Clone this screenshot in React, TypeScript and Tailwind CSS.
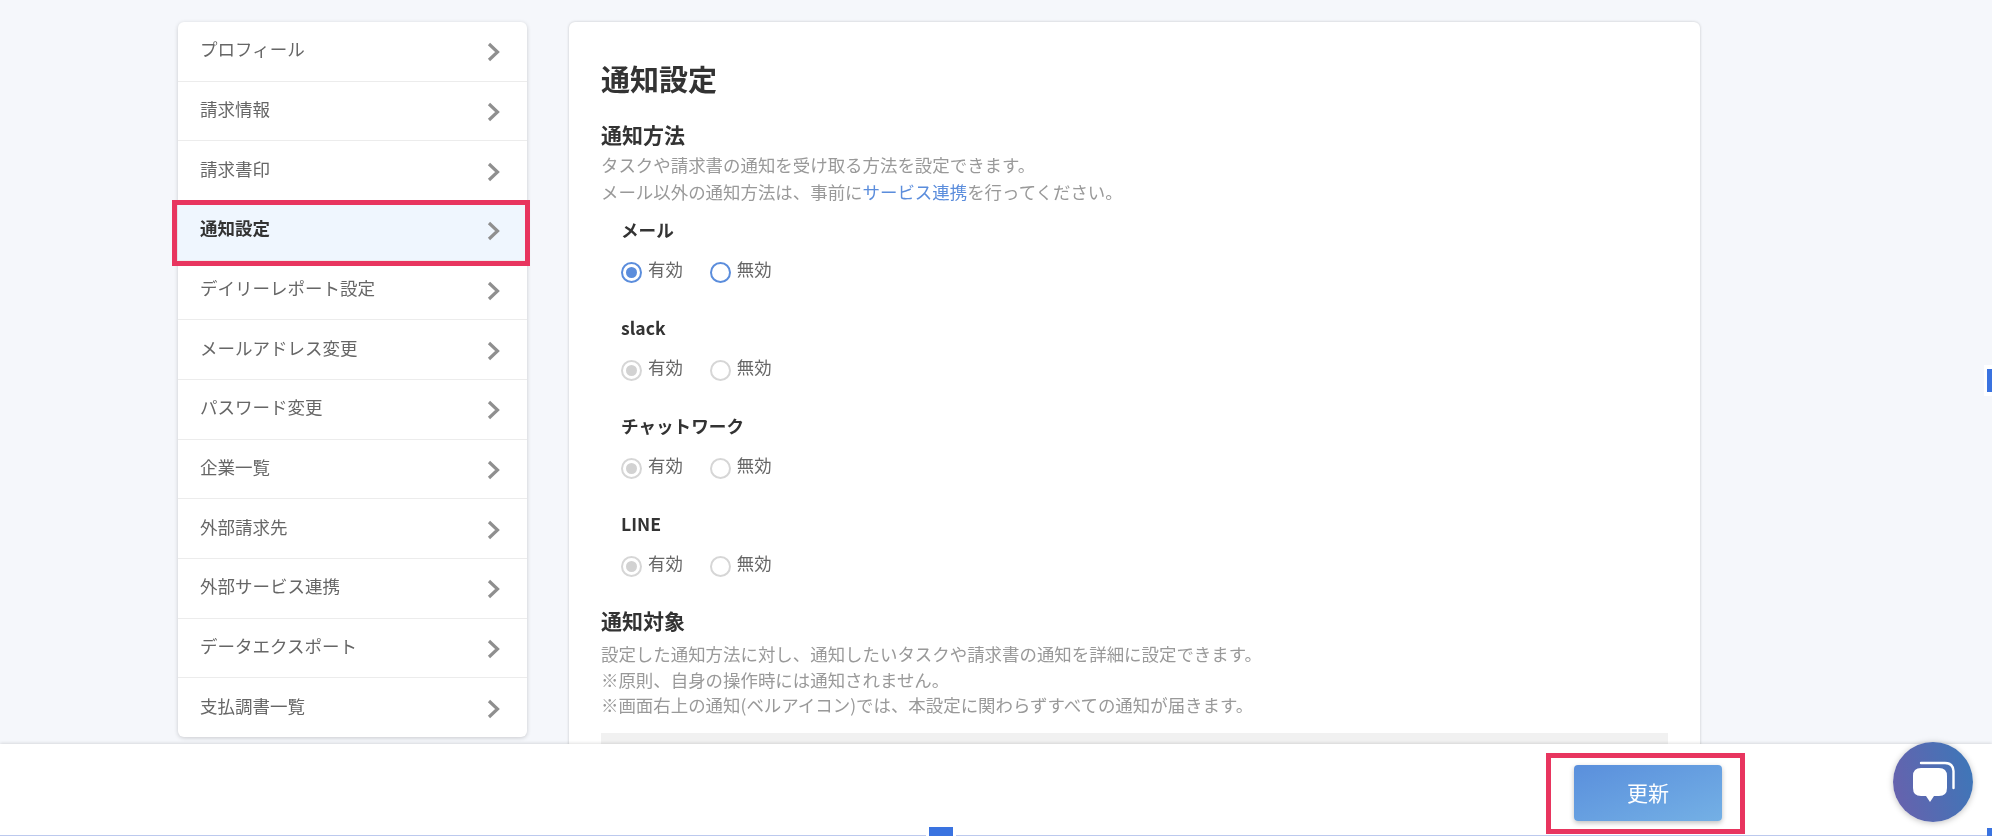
const items = ["プロフィール","請求情報","請求書印","通知設定","デイリーレポート設定","メールアドレス変更","パスワード変更","企業一覧","外部請求先","外部サービス連携","データエクスポート","支払調書一覧"];

function Radio({ label, checked, disabled }: { label: string; checked?: boolean; disabled?: boolean }) {
  return (
    <div className="flex items-center h-[28px]">
      <span className={"w-[21px] h-[21px] rounded-full border-2 bg-white flex items-center justify-center shrink-0 " + (disabled ? "border-[#d6d6d6]" : "border-[#5b8ddc]")}>
        {checked && <span className={"w-[11px] h-[11px] rounded-full " + (disabled ? "bg-[#d2d2d2]" : "bg-[#5b8ddc]")} />}
      </span>
      <span className="ml-[6px] text-[17.4px] text-[#666] leading-[28px] -translate-y-[3px]">{label}</span>
    </div>
  );
}

function Group({ name, disabled }: { name: string; disabled?: boolean }) {
  return (
    <div className="pl-[20px] mb-[28px]">
      <div className="h-[28px] leading-[28px] text-[17.6px] font-bold text-[#333]">{name}</div>
      <div className="mt-[14px] flex gap-[27px]">
        <Radio label="有効" checked disabled={disabled} />
        <Radio label="無効" disabled={disabled} />
      </div>
    </div>
  );
}

function Chevron() {
  return (
    <svg className="w-[13px] h-[20px] shrink-0 mt-[2px]" viewBox="0 0 13 20" fill="none" stroke="#8f8f8f" strokeWidth="3.2">
      <path d="M2 2 L10.5 10 L2 18" />
    </svg>
  );
}

export default function App() {
  return (
    <div className="relative h-[836px] w-full overflow-hidden bg-[#f5f7fb] flex flex-col blur-[0.4px] font-['Noto_Sans_CJK_JP','Noto_Sans',sans-serif]">
      <div className="h-[744px] overflow-hidden flex items-start pt-[22px] pl-[178px] gap-[42px] shrink-0">
        <nav className="w-[349px] h-[715px] bg-white rounded-[6px] shadow-[0_1px_4px_rgba(0,0,0,0.18)] flex flex-col shrink-0">
          {items.map((t, i) => {
            const active = t === "通知設定";
            return (
              <div key={t} className={"relative flex-1 flex items-center justify-between pl-[22px] pr-[27px] " + (active ? "bg-[#eff6fe]" : "") + (i < items.length - 1 ? " border-b border-[#ececec]" : "")}>
                <span className={"text-[17.5px] leading-[24px] -translate-y-[2px] " + (active ? "font-bold text-[#333]" : "text-[#666]")}>{t}</span>
                <Chevron />
                {active && <div className="absolute left-[-6px] right-[-3px] top-[-1px] bottom-[-6px] border-[5px] border-[#e8355f]" />}
              </div>
            );
          })}
        </nav>
        <main className="w-[1131px] h-[800px] bg-white rounded-[6px] shadow-[0_0_3px_rgba(0,0,0,0.2)] pl-[32px] pr-[32px] pt-[36px] shrink-0">
          <h1 className="h-[40px] leading-[40px] text-[29px] font-bold text-[#333]">通知設定</h1>
          <h2 className="mt-[21px] h-[30px] leading-[30px] text-[21px] font-bold text-[#333]">通知方法</h2>
          <div className="mt-[2px] text-[17.45px] leading-[27px] text-[#999]">
            <p>タスクや請求書の通知を受け取る方法を設定できます。</p>
            <p>メール以外の通知方法は、事前に<span className="text-[#5b8ddc]">サービス連携</span>を行ってください。</p>
          </div>
          <div className="mt-[11px]">
            <Group name="メール" />
            <Group name="slack" disabled />
            <Group name="チャットワーク" disabled />
            <Group name="LINE" disabled />
          </div>
          <h2 className="-mt-[3px] h-[30px] leading-[30px] text-[21px] font-bold text-[#333]">通知対象</h2>
          <div className="mt-[6px] text-[17.45px] leading-[25.7px] text-[#999]">
            <p>設定した通知方法に対し、通知したいタスクや請求書の通知を詳細に設定できます。</p>
            <p>※原則、自身の操作時には通知されません。</p>
            <p>※画面右上の通知(ベルアイコン)では、本設定に関わらずすべての通知が届きます。</p>
          </div>
          <div className="mt-[15px] h-[60px] bg-[#f1f1f1]" />
        </main>
      </div>
      <footer className="relative flex-1 bg-white border-b border-[#bcc9ee] shadow-[0_-1px_3px_rgba(0,0,0,0.12)] flex justify-end pt-[21px] pr-[270px]">
        <div className="relative h-[56px]">
          <button className="w-[148px] h-[56px] rounded-[4px] bg-gradient-to-br from-[#5a8fdc] to-[#74b0e5] text-white text-[21px] shadow-[0_2px_5px_rgba(0,0,0,0.25)]">更新</button>
          <div className="absolute left-[-28px] right-[-23px] top-[-12px] bottom-[-13px] border-[5px] border-[#e8355f]" />
        </div>
      </footer>
      <div className="absolute left-[1893px] top-[742px] w-[80px] h-[80px] rounded-full bg-[linear-gradient(75deg,#6a60ac,#3b78b9)] shadow-[0_1px_6px_rgba(0,0,0,0.25)]">
        <svg className="w-[80px] h-[80px]" viewBox="0 0 80 80" fill="none">
          <path d="M28 21 H52 Q60 21 60.5 29 V46" stroke="#fff" strokeWidth="2.4" strokeLinecap="round" />
          <path d="M28 26 H46 Q54 26 54 34 V46 Q54 54 46 54 H41 L37 60 L33 54 H28 Q20 54 20 46 V34 Q20 26 28 26 Z" fill="#fff" />
        </svg>
      </div>
      <div className="absolute left-[926px] bottom-0 w-[30px] h-[12px] bg-white">
        <div className="ml-[3px] mt-[3px] w-[24px] h-[9px] bg-[#3a73e0]" />
      </div>
      <div className="absolute right-0 top-[365px] w-[8px] h-[31px] bg-white">
        <div className="ml-[3px] mt-[4px] w-[5px] h-[23px] bg-[#3a73e0]" />
      </div>
      <div className="absolute right-0 bottom-0 w-[5px] h-[8px] bg-[#3a73e0]" />
    </div>
  );
}
